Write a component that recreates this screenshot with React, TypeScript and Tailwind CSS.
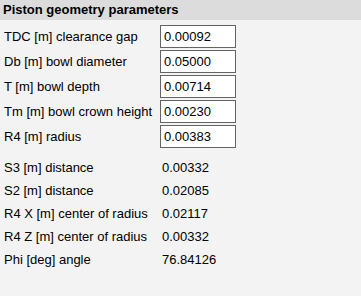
const inputs = [
  { label: "TDC [m] clearance gap", value: "0.00092" },
  { label: "Db [m] bowl diameter", value: "0.05000" },
  { label: "T [m] bowl depth", value: "0.00714" },
  { label: "Tm [m] bowl crown height", value: "0.00230" },
  { label: "R4 [m] radius", value: "0.00383" },
];

const outputs = [
  { label: "S3 [m] distance", value: "0.00332" },
  { label: "S2 [m] distance", value: "0.02085" },
  { label: "R4 X [m] center of radius", value: "0.02117" },
  { label: "R4 Z [m] center of radius", value: "0.00332" },
  { label: "Phi [deg] angle", value: "76.84126" },
];

const App = () => {
  return (
    <div
      className="w-[361px] h-[296px] bg-[#f3f3f3] text-black text-[13px] overflow-hidden"
      style={{ fontFamily: '"Liberation Sans", Arial, sans-serif' }}
    >
      <div className="h-[20px] bg-[#dcdcdc] pl-[3px] flex items-center font-bold text-[13px]">
        Piston geometry parameters
      </div>
      <div className="pt-[5px] flex flex-col gap-[2px]">
        {inputs.map(({ label, value }) => (
          <div key={label} className="flex items-center h-[23px]">
            <span className="w-[160px] pl-[4px] whitespace-nowrap">{label}</span>
            <div className="w-[76px] h-[23px] bg-white border border-[#646464] pl-[3px] flex items-center">
              {value}
            </div>
          </div>
        ))}
      </div>
      <div className="pt-[8px] flex flex-col">
        {outputs.map(({ label, value }) => (
          <div key={label} className="flex items-center h-[23px]">
            <span className="w-[162px] pl-[4px] whitespace-nowrap">{label}</span>
            <span>{value}</span>
          </div>
        ))}
      </div>
    </div>
  );
};

export default App;
